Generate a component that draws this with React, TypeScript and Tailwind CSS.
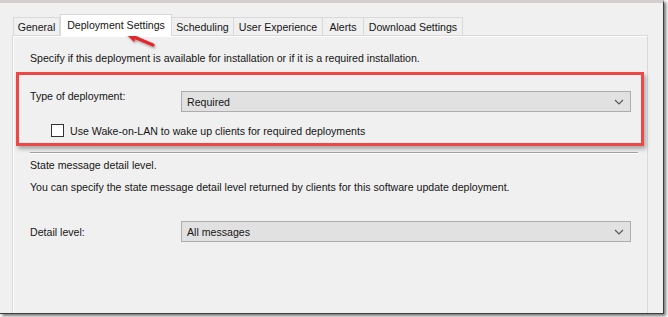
import React from "react";

const font = { fontFamily: '"Liberation Sans", Arial, sans-serif' };

function Chevron() {
  return (
    <svg width="10" height="6" viewBox="0 0 10 6" className="block">
      <path d="M1 1 L5 5 L9 1" fill="none" stroke="#555" strokeWidth="1.1" />
    </svg>
  );
}

function Combo({ value }: { value: string }) {
  return (
    <div className="w-[450px] h-[21px] bg-[#e1e1e1] border border-[#adadad] flex items-center justify-between pl-[5px] pr-[6px] shrink-0">
      <span className="leading-[16px]">{value}</span>
      <Chevron />
    </div>
  );
}

const tabs = [
  { label: "General", w: "w-[47px]" },
  { label: "Deployment Settings", w: "w-[112px]", active: true },
  { label: "Scheduling", w: "w-[63px]" },
  { label: "User Experience", w: "w-[90px]" },
  { label: "Alerts", w: "w-[42px]" },
  { label: "Download Settings", w: "w-[100px]" },
];

export default function App() {
  return (
    <div className="w-[668px] h-[317px] bg-white overflow-hidden relative text-[10.6px] text-[#151515]" style={font}>
      <div className="w-[664px] h-[314px] bg-[#f0f0f0] border-t-[3px] border-t-[#d3cdcd] border-r border-b border-r-[#3c3c3c] border-b-[#3c3c3c] shadow-[2px_2px_3px_rgba(0,0,0,0.55)] pl-[12px] pt-[11px] overflow-hidden">
        {/* tabs */}
        <div className="flex items-end h-[21px] pl-[1px] relative z-10">
          {tabs.map((t) =>
            t.active ? (
              <div
                key={t.label}
                className={`${t.w} h-[22px] -mb-px bg-white border-t border-l border-r border-[#d9d9d9] flex items-center justify-center pb-[2px] shrink-0`}
              >
                <span className="leading-[14px] whitespace-nowrap">{t.label}</span>
              </div>
            ) : (
              <div
                key={t.label}
                className={`${t.w} h-[18px] bg-[#f0f0f0] border-t border-l border-r border-[#d9d9d9] flex items-center justify-center shrink-0 -ml-px first:ml-0`}
              >
                <span className="leading-[14px] whitespace-nowrap">{t.label}</span>
              </div>
            )
          )}
        </div>
        {/* panel */}
        <div className="w-[636px] h-[300px] border border-[#d9d9d9] shadow-[inset_1px_1px_0_#ffffff] bg-[#f0f0f0]">
          <div className="pl-[17px] mt-[14px] h-[16px] leading-[16px]">
            Specify if this deployment is available for installation or if it is a required installation.
          </div>
          <div className="mt-[6px] mx-[3px] border-[3px] border-[#ef4646] shadow-[2px_3px_4px_rgba(0,0,0,0.3)] pt-[16px] pb-[6px]">
            <div className="flex items-start pl-[11px]">
              <div className="w-[151px] leading-[16px] -mt-[3px] shrink-0">Type of deployment:</div>
              <Combo value="Required" />
            </div>
            <div className="flex items-center mt-[12px] pl-[32px] h-[13px]">
              <div className="w-[13px] h-[13px] bg-white border border-[#333] shrink-0" />
              <span className="ml-[6px] leading-[14px]">Use Wake-on-LAN to wake up clients for required deployments</span>
            </div>
          </div>
          <div className="mt-[6px] ml-[17px] mr-[9px] border-t border-t-[#a0a0a0] border-b border-b-white" />
          <div className="pl-[17px] mt-[3px] h-[16px] leading-[16px]">State message detail level.</div>
          <div className="pl-[17px] mt-[6px] h-[16px] leading-[16px]">
            You can specify the state message detail level returned by clients for this software update deployment.
          </div>
          <div className="flex items-center pl-[17px] mt-[26px]">
            <div className="w-[151px] leading-[16px] shrink-0">Detail level:</div>
            <Combo value="All messages" />
          </div>
        </div>
      </div>
      {/* red arrow annotation */}
      <svg className="absolute left-0 top-0 pointer-events-none" width="668" height="317">
        <defs>
          <filter id="sh" x="-50%" y="-50%" width="200%" height="200%">
            <feDropShadow dx="1" dy="1.5" stdDeviation="1" floodColor="#000" floodOpacity="0.35" />
          </filter>
        </defs>
        <g filter="url(#sh)">
          <line x1="153" y1="45" x2="134" y2="37" stroke="#e3262b" strokeWidth="3.2" strokeLinecap="round" />
          <polygon points="124,32 139,30 134,42" fill="#e3262b" />
        </g>
      </svg>
    </div>
  );
}
